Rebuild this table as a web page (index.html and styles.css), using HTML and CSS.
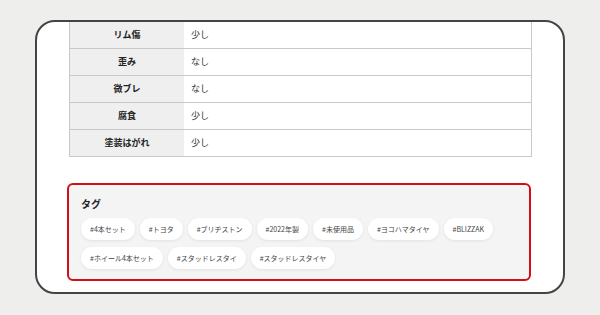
FILE: index.html
```html
<!DOCTYPE html>
<html lang="ja">
<head>
<meta charset="utf-8">
<link rel="stylesheet" href="styles.css">
</head>
<body>
<div class="card">
  <table class="spec">
    <tr><th>リム傷</th><td>少し</td></tr>
    <tr><th>歪み</th><td>なし</td></tr>
    <tr><th>微ブレ</th><td>なし</td></tr>
    <tr><th>腐食</th><td>少し</td></tr>
    <tr><th>塗装はがれ</th><td>少し</td></tr>
  </table>
  <section class="tags">
    <h2 class="tags-title">タグ</h2>
    <ul class="tag-list">
      <li class="tag">#4本セット</li>
      <li class="tag">#トヨタ</li>
      <li class="tag">#ブリヂストン</li>
      <li class="tag">#2022年製</li>
      <li class="tag">#未使用品</li>
      <li class="tag">#ヨコハマタイヤ</li>
      <li class="tag">#BLIZZAK</li>
      <li class="tag">#ホイール4本セット</li>
      <li class="tag">#スタッドレスタイ</li>
      <li class="tag">#スタッドレスタイヤ</li>
    </ul>
  </section>
</div>
</body>
</html>
```
FILE: styles.css
```css
html, body {
  margin: 0;
  padding: 0;
}
body {
  background: #eeeeec;
  font-family: "Noto Sans CJK JP", "Noto Sans", sans-serif;
  color: #333;
  width: 600px;
  height: 315px;
  overflow: hidden;
}
.card {
  box-sizing: border-box;
  margin: 20px 0 0 35px;
  width: 530px;
  height: 274px;
  background: #fff;
  border: 2px solid #444;
  border-radius: 20px;
  padding: 0 31px 0 32px;
  overflow: hidden;
}
.spec {
  width: 463px;
  border-collapse: collapse;
  border-left: 1px solid #c8c8c8;
  border-right: 1px solid #c8c8c8;
  font-size: 9px;
}
.spec tr {
  border-bottom: 1px solid #c8c8c8;
}
.spec th, .spec td {
  height: 26px;
  padding: 0;
  line-height: 26px;
}
.spec th {
  width: 114px;
  background: #efefef;
  font-weight: 700;
  text-align: center;
  color: #222;
}
.spec td {
  padding-left: 7px;
  text-align: left;
  color: #333;
}
.tags {
  box-sizing: border-box;
  margin: 26px 0 0 -2px;
  width: 464px;
  height: 98px;
  background: #f4f4f4;
  border: 2px solid #d40e19;
  border-radius: 6px;
  padding: 12px 12px 0 12px;
}
.tags-title {
  margin: 0 0 7px 0;
  font-size: 10px;
  font-weight: 700;
  color: #222;
  line-height: 14px;
}
.tag-list {
  list-style: none;
  margin: 0;
  padding: 0;
  display: flex;
  flex-wrap: wrap;
  gap: 7px 5px;
}
.tag {
  height: 22px;
  line-height: 22px;
  padding: 0 9px;
  background: #fff;
  border-radius: 11px;
  font-size: 7px;
  color: #444;
  box-shadow: 0 1px 3px rgba(0, 0, 0, 0.08);
}
```
